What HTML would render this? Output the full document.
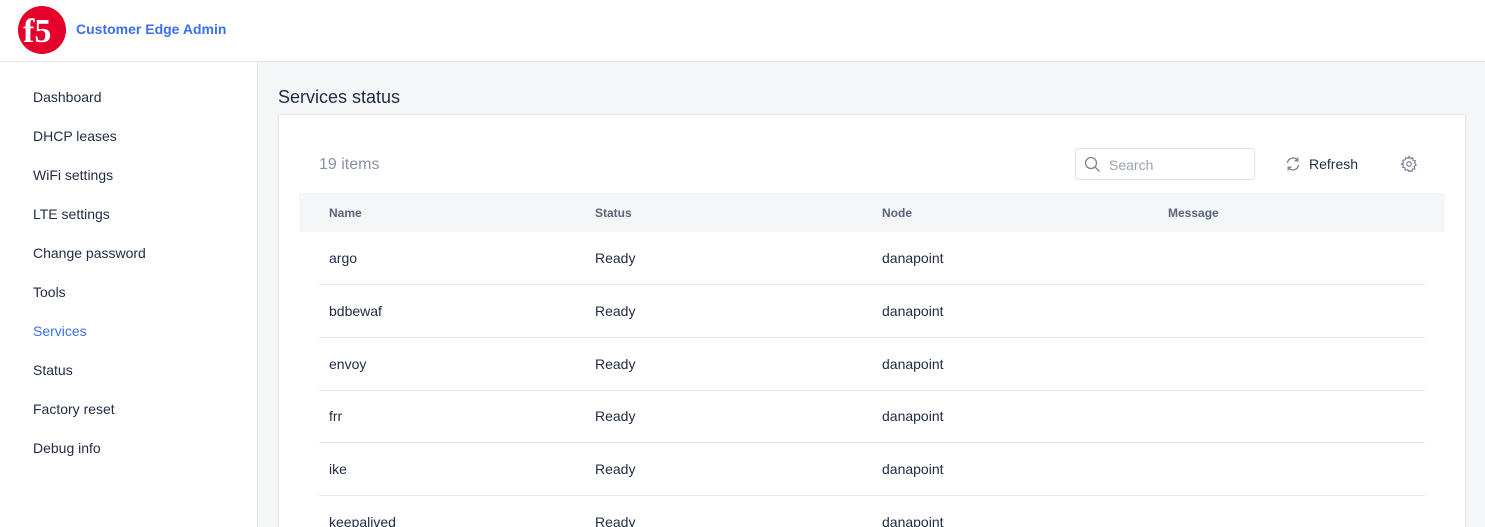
<!DOCTYPE html>
<html style="width:1485px;height:527px;overflow:hidden"><head><style>
*{margin:0;padding:0;box-sizing:border-box}
body{width:1485px;height:527px;overflow:hidden;font-family:"Liberation Sans",sans-serif;background:#f5f6f8;color:#1f2a44;position:relative}
.hdr{position:absolute;left:0;top:0;width:1485px;height:62px;background:#fff;border-bottom:1px solid #e1e4e9}
.logo{position:absolute;left:18px;top:6px}
.title{position:absolute;left:76px;top:21px;font-size:14px;font-weight:bold;color:#3b6ef0}
.side{position:absolute;left:0;top:62px;width:258px;height:465px;background:#fff;border-right:1px solid #e1e4e9}
.side div{position:absolute;left:33px;font-size:14px;color:#1f2a44}
h1{position:absolute;left:278px;top:87px;font-size:18px;font-weight:normal;color:#1f2a44}
.card{position:absolute;left:278px;top:114px;width:1188px;height:413px;background:#fff;border:1px solid #e4e7ec;border-bottom:none;border-radius:3px 3px 0 0}
.abs{position:absolute}
.th{position:absolute;top:193px;left:299px;width:1146px;height:39px;background:#f5f6f8}
.th span{position:absolute;top:13px;font-size:12px;font-weight:bold;color:#5a6478}
.row{position:absolute;left:319px;width:1106px;height:53px;border-bottom:1px solid #e4e7ec;font-size:14px}
.row span{position:absolute;top:18px}
</style></head><body>
<div class="hdr">
<svg class="logo" width="48" height="48" viewBox="0 0 48 48"><circle cx="24" cy="24" r="24" fill="#e4002b"/><text x="5" y="36" font-family="Liberation Serif,serif" font-weight="bold" font-size="34" fill="#fff">f5</text></svg>
<div class="title">Customer Edge Admin</div>
</div>
<div class="side">
<div style="top:27px">Dashboard</div>
<div style="top:66px">DHCP leases</div>
<div style="top:105px">WiFi settings</div>
<div style="top:144px">LTE settings</div>
<div style="top:183px">Change password</div>
<div style="top:222px">Tools</div>
<div style="top:261px;color:#3b6ef0">Services</div>
<div style="top:300px">Status</div>
<div style="top:339px">Factory reset</div>
<div style="top:378px">Debug info</div>
</div>
<h1>Services status</h1>
<div class="card"></div>
<div class="abs" style="left:319px;top:156px;font-size:16px;color:#8a93a3">19 items</div>
<div class="abs" style="left:1075px;top:148px;width:180px;height:32px;border:1px solid #dfe2e8;border-radius:3px;background:#fff">
<svg class="abs" style="left:8px;top:7px" width="17" height="17" viewBox="0 0 17 17"><circle cx="7" cy="7" r="5.5" fill="none" stroke="#7a8394" stroke-width="1.3"/><path d="M11 11l4.5 4.5" stroke="#7a8394" stroke-width="1.3"/></svg>
<span class="abs" style="left:33px;top:8px;font-size:14px;color:#9aa2b1">Search</span></div>
<svg class="abs" style="left:1285px;top:156px" width="16" height="16" viewBox="0 0 16 16" fill="none" stroke="#7a8394" stroke-width="1.3"><path d="M2.5 7A5.5 5.5 0 0 1 12.5 4.5M13.5 9A5.5 5.5 0 0 1 3.5 11.5"/><path d="M12.8 1.5v3.3H9.5M3.2 14.5v-3.3h3.3"/></svg>
<div class="abs" style="left:1309px;top:156px;font-size:14px">Refresh</div>
<svg class="abs" style="left:1400px;top:155px" width="18" height="18" viewBox="0 0 24 24" fill="none" stroke="#7a8394" stroke-width="1.6"><circle cx="12" cy="12" r="3"/><path d="M12 2l1.8 2.6 3.1-.8.6 3.1 3 1-.9 3.1 2 2.4-2.6 1.8.8 3.1-3.1.6-1 3-3.1-.9L12 22l-1.8-2.6-3.1.8-.6-3.1-3-1 .9-3.1L2 12l2.6-1.8-.8-3.1 3.1-.6 1-3 3.1.9z"/></svg>
<div class="th"><span style="left:30px">Name</span><span style="left:296px">Status</span><span style="left:583px">Node</span><span style="left:869px">Message</span></div>
<div class="row" style="top:232px"><span style="left:10px">argo</span><span style="left:276px">Ready</span><span style="left:563px">danapoint</span></div>
<div class="row" style="top:285px"><span style="left:10px">bdbewaf</span><span style="left:276px">Ready</span><span style="left:563px">danapoint</span></div>
<div class="row" style="top:338px"><span style="left:10px">envoy</span><span style="left:276px">Ready</span><span style="left:563px">danapoint</span></div>
<div class="row" style="top:390px"><span style="left:10px">frr</span><span style="left:276px">Ready</span><span style="left:563px">danapoint</span></div>
<div class="row" style="top:443px"><span style="left:10px">ike</span><span style="left:276px">Ready</span><span style="left:563px">danapoint</span></div>
<div class="row" style="top:496px;border-bottom:none"><span style="left:10px">keepalived</span><span style="left:276px">Ready</span><span style="left:563px">danapoint</span></div>
</body></html>
